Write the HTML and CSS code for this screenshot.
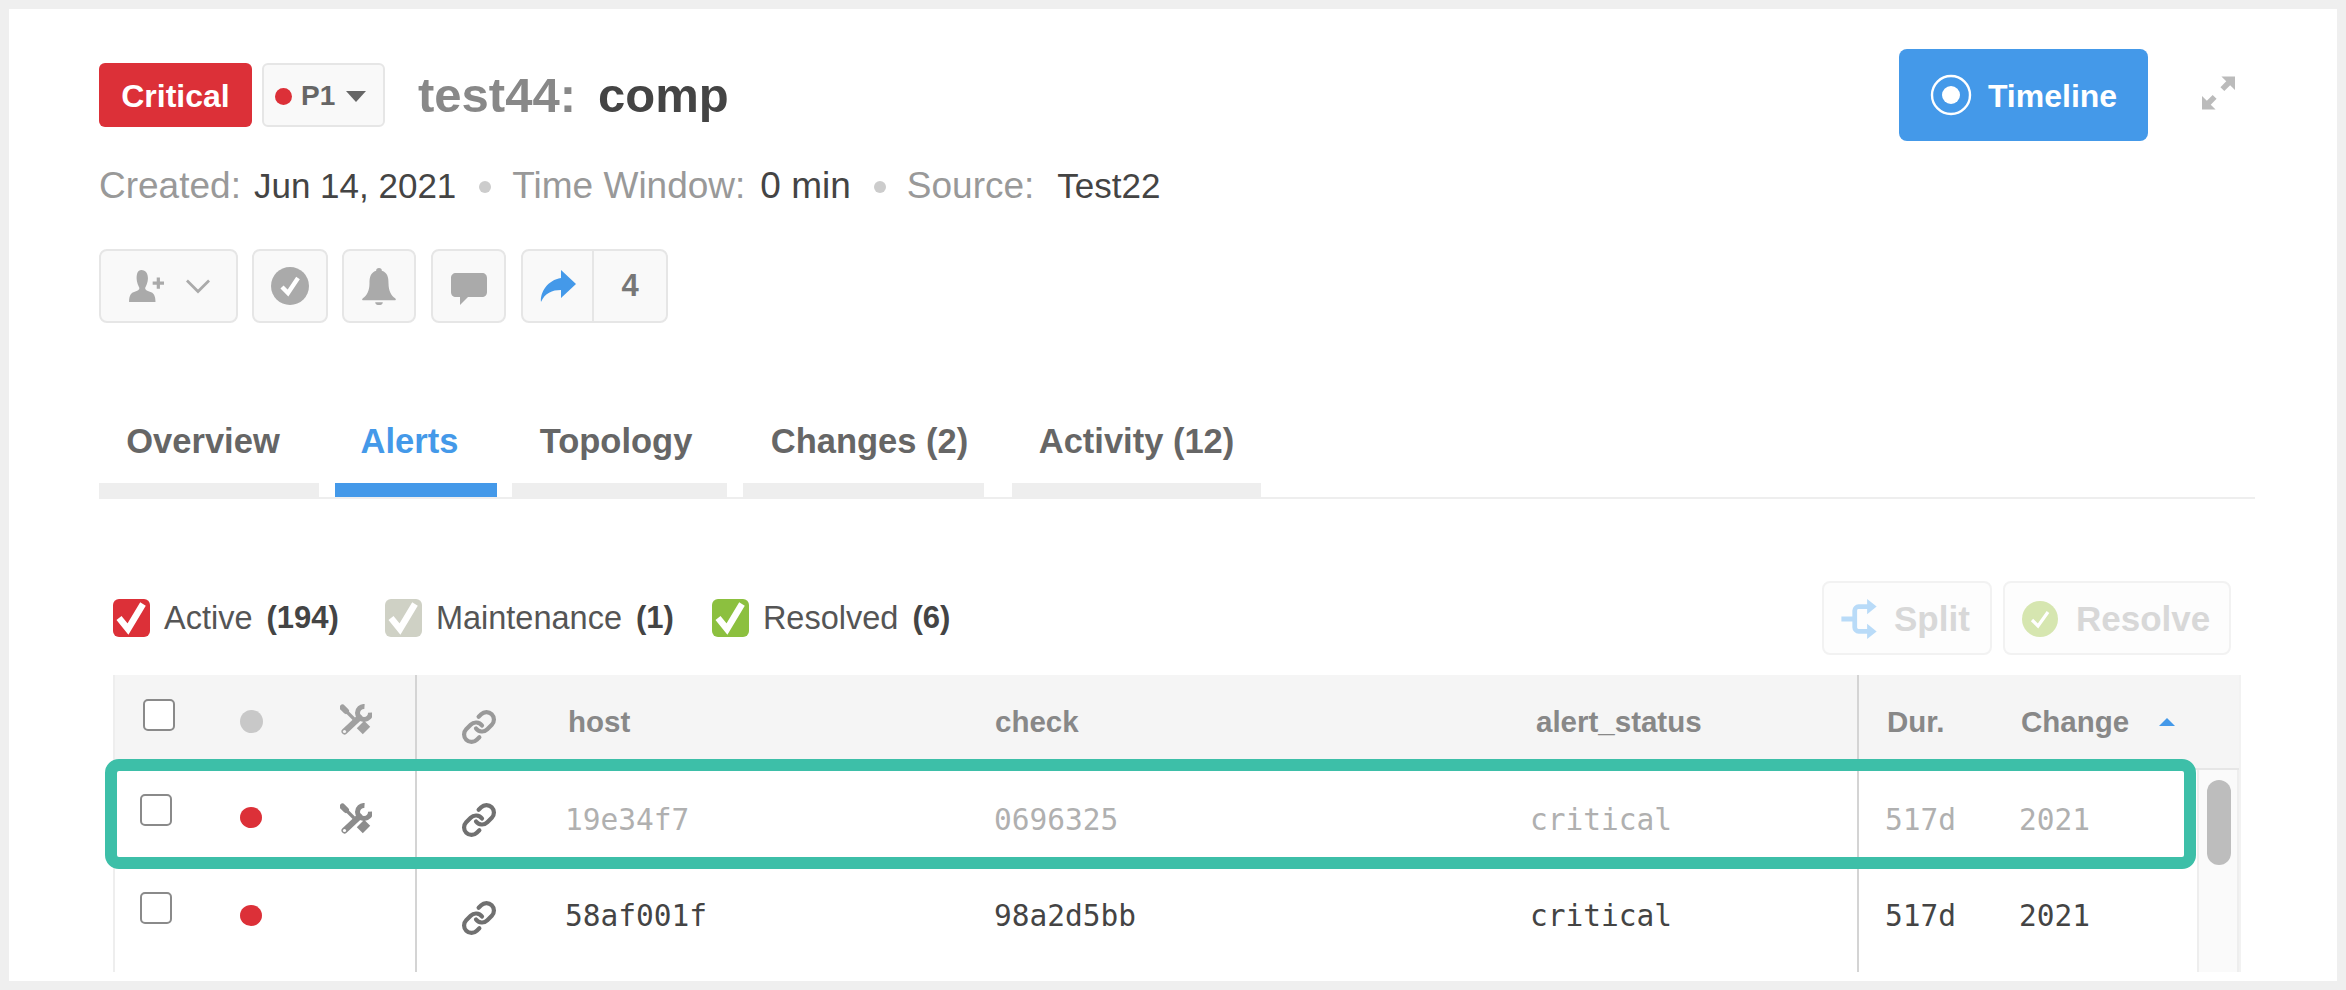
FILE: index.html
```html
<!DOCTYPE html>
<html lang="en">
<head>
<meta charset="utf-8">
<title>test44: comp</title>
<link rel="stylesheet" href="styles.css">
</head>
<body>
<main class="panel">
  <header class="head">
    <div class="head-left">
      <div class="title-row">
        <span class="badge">Critical</span>
        <button class="prio"><i class="dot dot-s"></i>P1<i class="caret"></i></button>
        <h1 class="title"><span class="title-key">test44:</span><span class="title-val">comp</span></h1>
      </div>
      <div class="meta">
        <span class="m-label">Created:</span><span class="m-val m-date">Jun 14, 2021</span><i class="sep"></i>
        <span class="m-label">Time Window:</span><span class="m-val">0 min</span><i class="sep"></i>
        <span class="m-label">Source:</span><span class="m-val m-src">Test22</span>
      </div>
      <div class="actions">
        <button class="act act-assign">
          <svg class="ic-person" viewBox="0 0 40 36"><path fill="#aaa" d="M14 1c5 0 7 4 7 9 0 4-2 8-3 10 0 2 2 3 5 4 4 1 6 4 6 11H1c0-7 2-10 6-11 3-1 5-2 5-4-1-2-3-6-3-10 0-5 1-9 5-9z"/><path fill="none" stroke="#aaa" stroke-width="3.4" d="M32 9v12M26 15h12"/></svg>
          <svg class="ic-chev" viewBox="0 0 26 16"><path fill="none" stroke="#aaa" stroke-width="3" d="M1 2l12 12L25 2"/></svg>
        </button>
        <button class="act act-icon">
          <svg class="ic-30" viewBox="0 0 38 38"><circle cx="19" cy="19" r="19" fill="#aaa"/><path fill="none" stroke="#fff" stroke-width="4.4" d="M11 20l6 6 10-15"/></svg>
        </button>
        <button class="act act-icon act-bell">
          <svg class="ic-30" viewBox="0 0 38 40"><path fill="#aaa" d="M19 1c2 0 3 1 3 3 6 2 7 7 7 13 0 8 3 13 7 16 1 1 1 2 0 2H2c-1 0-1-1 0-2 4-3 7-8 7-16 0-6 1-11 7-13 0-2 1-3 3-3z"/><path fill="#aaa" d="M15 37h8c0 2-2 3-4 3s-4-1-4-3z"/></svg>
        </button>
        <button class="act act-icon act-comment">
          <svg class="ic-30" viewBox="0 0 38 38"><path fill="#aaa" d="M6 6h26c3 0 5 2 5 5v14c0 3-2 5-5 5H18l-8 8v-8H6c-3 0-5-2-5-5V11c0-3 2-5 5-5z"/></svg>
        </button>
        <div class="act act-share">
          <span class="share-ic"><svg class="ic-share" viewBox="0 0 36 32"><path fill="#4499e9" d="M21 0l15 14-15 14v-8C12 20 5 23 1 32 0 22 8 10 21 8z"/></svg></span>
          <span class="share-n">4</span>
        </div>
      </div>
    </div>
    <div class="head-right">
      <button class="timeline">
        <svg class="ic-target" viewBox="0 0 42 42"><circle cx="21" cy="21" r="19" fill="none" stroke="#fff" stroke-width="2.4"/><circle cx="21" cy="21" r="9" fill="#fff"/></svg>
        <span class="timeline-text">Timeline</span>
      </button>
      <svg class="ic-expand" viewBox="0 0 34 34"><path fill="#bbb" d="M20 0h14v14l-5-5-6 6-4-4 6-6zM14 34H0V20l5 5 6-6 4 4-6 6z"/></svg>
    </div>
  </header>

  <nav class="tabs">
    <a class="tab tab-1"><span class="tab-text">Overview</span></a>
    <a class="tab tab-2 is-active"><span class="tab-text">Alerts</span></a>
    <a class="tab tab-3"><span class="tab-text">Topology</span></a>
    <a class="tab tab-4"><span class="tab-text">Changes (2)</span></a>
    <a class="tab tab-5"><span class="tab-text">Activity (12)</span></a>
  </nav>

  <section class="toolbar">
    <div class="filters">
      <label class="filter"><svg class="fcheck" viewBox="0 0 37 38"><rect width="37" height="38" rx="6" fill="#dc3038"/><path fill="none" stroke="#fff" stroke-width="6.5" d="M6 19l9 11L30 5"/></svg><span class="f-name">Active</span><b class="f-n">(194)</b></label>
      <label class="filter"><svg class="fcheck" viewBox="0 0 37 38"><rect width="37" height="38" rx="6" fill="#cfd1c5"/><path fill="none" stroke="#fff" stroke-width="6.5" d="M6 19l9 11L30 5"/></svg><span class="f-name">Maintenance</span><b class="f-n">(1)</b></label>
      <label class="filter"><svg class="fcheck" viewBox="0 0 37 38"><rect width="37" height="38" rx="6" fill="#8cc03f"/><path fill="none" stroke="#fff" stroke-width="6.5" d="M6 19l9 11L30 5"/></svg><span class="f-name">Resolved</span><b class="f-n">(6)</b></label>
    </div>
    <div class="tools">
      <button class="tool tool-split">
        <svg class="ic-split" viewBox="0 0 38 42"><path fill="none" stroke="#b9dbf8" stroke-width="5" d="M0 21h14M33 8H18c-2 0-4 2-4 4v18c0 2 2 4 4 4h15"/><path fill="#b9dbf8" d="M27 0l10 8-10 8zM27 26l10 8-10 8z"/></svg>
        Split
      </button>
      <button class="tool tool-resolve">
        <svg class="ic-resolve" viewBox="0 0 36 36"><circle cx="18" cy="18" r="18" fill="#d6e6b0"/><path fill="none" stroke="#fff" stroke-width="3.2" d="M10 19l6 6 10-14"/></svg>
        Resolve
      </button>
    </div>
  </section>

  <section class="table-wrap">
    <div class="table">
      <div class="row row-head">
        <div class="c c-check"><i class="cb cb-head"></i></div>
        <div class="c c-dot"><i class="dot dot-l dot-grey"></i></div>
        <div class="c c-tool">
          <svg class="ic-tools tools-light" viewBox="0 0 32 32"><use href="#tools"/></svg>
        </div>
        <div class="c c-link"><svg class="ic-link link-light" viewBox="0 0 24 24"><use href="#link"/></svg></div>
        <div class="c c-host">host</div>
        <div class="c c-chk">check</div>
        <div class="c c-status">alert_status</div>
        <div class="c c-dur">Dur.</div>
        <div class="c c-change">Change<i class="sort"></i></div>
      </div>
      <div class="body">
        <div class="rows">
          <div class="row row-data is-muted">
            <div class="c c-check"><i class="cb"></i></div>
            <div class="c c-dot"><i class="dot dot-l"></i></div>
            <div class="c c-tool"><svg class="ic-tools" viewBox="0 0 32 32"><use href="#tools"/></svg></div>
            <div class="c c-link"><svg class="ic-link" viewBox="0 0 24 24"><use href="#link"/></svg></div>
            <div class="c c-host">19e34f7</div>
            <div class="c c-chk">0696325</div>
            <div class="c c-status">critical</div>
            <div class="c c-dur">517d</div>
            <div class="c c-change">2021</div>
          </div>
          <div class="row row-data is-second">
            <div class="c c-check"><i class="cb"></i></div>
            <div class="c c-dot"><i class="dot dot-l"></i></div>
            <div class="c c-tool"></div>
            <div class="c c-link"><svg class="ic-link" viewBox="0 0 24 24"><use href="#link"/></svg></div>
            <div class="c c-host">58af001f</div>
            <div class="c c-chk">98a2d5bb</div>
            <div class="c c-status">critical</div>
            <div class="c c-dur">517d</div>
            <div class="c c-change">2021</div>
          </div>
          <div class="row row-data">
            <div class="c c-check"></div><div class="c c-dot"></div><div class="c c-tool"></div><div class="c c-link"></div>
            <div class="c c-host"></div><div class="c c-chk"></div><div class="c c-status"></div><div class="c c-dur"></div><div class="c c-change"></div>
          </div>
        </div>
        <div class="scroll"><i class="thumb"></i></div>
      </div>
    </div>
    <div class="highlight"></div>
  </section>
</main>

<svg class="defs" width="0" height="0" aria-hidden="true">
  <defs>
    <g id="tools">
      <path fill="none" stroke="currentColor" stroke-width="6" stroke-linecap="round" d="M2.5 3.5L6 7"/>
      <path fill="none" stroke="currentColor" stroke-width="3.2" d="M5 6l9 9"/>
      <path fill="none" stroke="currentColor" stroke-width="10.5" stroke-linejoin="round" d="M20.5 20.5l6 6"/>
      <path fill="none" stroke="currentColor" stroke-width="5" d="M24.5 2.5A6.5 6.5 0 1 0 30.5 8.5"/>
      <path fill="none" stroke="currentColor" stroke-width="6" stroke-linecap="round" d="M19.5 13.5L4.5 27.5"/>
      <circle class="hole" cx="4.5" cy="27.5" r="1.6"/>
    </g>
    <g id="link" fill="none" stroke="currentColor" stroke-width="2.8" stroke-linecap="round">
      <path d="M10 13a5 5 0 0 0 7.54.54l3-3a5 5 0 0 0-7.07-7.07l-1.72 1.71"/>
      <path d="M14 11a5 5 0 0 0-7.54-.54l-3 3a5 5 0 0 0 7.07 7.07l1.71-1.71"/>
    </g>
  </defs>
</svg>
</body>
</html>
```
FILE: styles.css
```css
* { box-sizing: border-box; }
html, body { margin: 0; height: 990px; overflow: hidden; }
body { background: #efefef; padding: 9px; font-family: "Liberation Sans", Arial, sans-serif; color: #444; }
button { font-family: inherit; cursor: pointer; }
i { display: block; }
.defs { position: absolute; }

.panel { background: #fff; height: 972px; padding: 40px 82px 0 90px; overflow: hidden; }

.head { display: flex; justify-content: space-between; align-items: flex-start; }
.head-left { padding-top: 14px; }
.title-row { display: flex; align-items: center; height: 64px; }
.badge { background: #dc3038; color: #fff; font-weight: 700; font-size: 32px; width: 153px; height: 64px; line-height: 67px; text-align: center; border-radius: 6px; }
.prio { margin-left: 10px; width: 123px; height: 64px; border: 2px solid #e6e6e6; border-radius: 6px; background: #f9f9f9; display: flex; align-items: center; padding: 2px 0 0 11px; font-weight: 700; font-size: 28px; color: #666; }
.dot { border-radius: 50%; background: #dc3038; }
.dot-s { width: 17px; height: 17px; margin-right: 9px; }
.caret { margin-left: 11px; width: 0; height: 0; border-left: 10px solid transparent; border-right: 10px solid transparent; border-top: 11px solid #666; }
.title { margin: 0 0 0 33px; font-size: 49px; line-height: 60px; font-weight: 700; display: flex; }
.title-key { color: #888; }
.title-val { color: #444; margin-left: 22px; }

.meta { display: flex; align-items: center; margin-top: 39px; height: 40px; font-size: 37px; color: #999; }
.m-val { color: #444; margin-left: 15px; font-size: 37px; }
.m-date { font-size: 35px; margin-left: 13px; }
.m-src { font-size: 35px; margin-left: 23px; }
.sep { width: 12px; height: 12px; border-radius: 50%; background: #ccc; margin: 2px 21px 0 23px; }

.actions { display: flex; margin-top: 43px; height: 74px; }
.act { height: 74px; border: 2px solid #e6e6e6; border-radius: 8px; background: #f9f9f9; display: flex; align-items: center; justify-content: center; padding: 0; }
.act-assign { width: 139px; gap: 20px; margin-right: 14px; }
.act-icon { width: 76px; margin-right: 14px; }
.act-bell { width: 74px; margin-right: 15px; }
.act-comment { width: 75px; margin-right: 15px; }
.act-share { width: 147px; justify-content: flex-start; }
.ic-person { width: 38px; height: 34px; }
.ic-chev { width: 24px; height: 16px; }
.ic-30 { width: 38px; height: 38px; }
.share-ic { width: 71px; height: 100%; border-right: 2px solid #e6e6e6; display: flex; align-items: center; justify-content: center; }
.ic-share { width: 36px; height: 32px; }
.share-n { flex: 1; text-align: center; font-weight: 700; font-size: 31px; color: #777; }

.head-right { display: flex; align-items: center; gap: 54px; margin-right: 20px; height: 92px; }
.timeline { width: 249px; height: 92px; background: #4499e9; border: 0; border-radius: 8px; color: #fff; font-weight: 700; font-size: 32px; display: flex; align-items: center; justify-content: center; gap: 16px; padding: 0; }
.timeline-text { padding-top: 2px; }
.ic-target { width: 42px; height: 42px; }
.ic-expand { width: 33px; height: 34px; margin-top: -4px; }

.tabs { display: flex; margin: 98px 0 0; border-bottom: 2px solid #eee; height: 78px; }
.tab { display: block; height: 76px; border-bottom: 14px solid #eee; font-size: 34.5px; font-weight: 700; color: #666; text-align: center; line-height: 40px; }
.tab-text { display: block; }
.tab-1 { width: 220px; padding-right: 12px; }
.tab-2 { width: 162px; margin-left: 16px; padding-right: 13px; }
.tab-3 { width: 215px; margin-left: 15px; padding-right: 7px; }
.tab-4 { width: 241px; margin-left: 16px; padding-left: 12px; }
.tab-5 { width: 249px; margin-left: 28px; }
.is-active { color: #4499e9; border-bottom-color: #4499e9; }

.toolbar { display: flex; justify-content: space-between; align-items: center; margin-top: 82px; height: 74px; padding: 0 24px 0 14px; }
.filters { display: flex; align-items: center; }
.filter { display: flex; align-items: center; font-size: 32.5px; color: #555; }
.filter + .filter { margin-left: 46px; }
.filter:last-child { margin-left: 38px; }
.fcheck { width: 37px; height: 38px; margin-right: 14px; }
.f-n { margin-left: 14px; color: #444; font-size: 31px; }
.tools { display: flex; gap: 11px; }
.tool { height: 74px; border: 2px solid #f2f2f2; border-radius: 8px; background: #fdfdfd; color: #d8d8d8; font-weight: 700; font-size: 35px; display: flex; align-items: center; padding: 2px 0 0; }
.tool-split { width: 170px; padding-left: 17px; gap: 16px; }
.tool-resolve { width: 228px; padding-left: 17px; gap: 18px; }
.ic-split { width: 37px; height: 40px; }
.ic-resolve { width: 36px; height: 36px; }

.table-wrap { position: relative; margin: 20px 0 0 14px; width: 2128px; height: 297px; }
.table { height: 100%; overflow: hidden; border-left: 2px solid #eee; border-right: 2px solid #f2f2f2; }
.row { display: grid; grid-template-columns: 90px 92px 120px 123px 427px 541px 351px 133px 1fr; }
.c { display: flex; align-items: center; }
.row-head { height: 95px; background: #f5f5f5; border-bottom: 2px solid #e6e6e6; font-size: 29.5px; font-weight: 700; color: #888; --hole: #f5f5f5; }
.row-head .c-check { padding-left: 28px; align-items: flex-start; padding-top: 24px; }
.row-head .c-tool { align-items: flex-start; padding-top: 29px; }
.row-head .c-link { padding-top: 10px; }
.row-head .c-host { padding-left: 28px; }
.row-head .c-chk { padding-left: 28px; }
.row-head .c-status { padding-left: 28px; }
.row-head .c-dur { padding-left: 28px; }
.row-head .c-change { padding-left: 29px; }

.body { display: flex; height: 202px; }
.rows { flex: 1; min-width: 0; --hole: #fff; }
.row-data { height: 98px; font-family: "DejaVu Sans Mono", monospace; font-size: 29.5px; color: #444; }
.row-data .c-check { padding: 24px 0 0 25px; align-items: flex-start; }
.row-data .c-dot { padding-bottom: 4px; }
.row-data .c-link { padding-top: 2px; }
.row-data .c-host { padding-left: 25px; }
.row-data .c-chk { padding-left: 27px; }
.row-data .c-status { padding-left: 22px; }
.row-data .c-dur { padding-left: 26px; }
.row-data .c-change { padding-left: 27px; }
.is-muted { color: #b0b0b0; }
.is-muted .c-host, .is-muted .c-chk, .is-muted .c-status, .is-muted .c-dur, .is-muted .c-change { padding-top: 2px; }
.is-second .c-host, .is-second .c-chk, .is-second .c-status, .is-second .c-dur, .is-second .c-change { padding-bottom: 2px; }
.hole { fill: var(--hole); }

.c-check, .c-dot, .c-tool { min-width: 0; }
.c-dot, .c-tool, .c-link { justify-content: center; }
.c-tool { border-right: 2px solid #d4d4d4; }
.c-status { border-right: 2px solid #d4d4d4; }

.cb { width: 32px; height: 32px; background: #fff; border: 2px solid #8a8a8a; border-radius: 5px; }
.dot-l { width: 22px; height: 21px; }
.dot-grey { background: #c8c8c8; width: 23px; height: 23px; }
.ic-tools { width: 32px; height: 32px; color: #8c8c8c; }
.tools-light { color: #a0a0a0; }
.ic-link { width: 36px; height: 36px; color: #707070; }
.link-light { color: #999; }
.sort { margin-left: 30px; width: 0; height: 0; border-left: 8px solid transparent; border-right: 8px solid transparent; border-bottom: 8px solid #4499e9; }

.scroll { width: 42px; flex: none; background: #fafafa; border-left: 2px solid #eee; border-right: 2px solid #eee; padding: 10px 8px 0 8px; }
.thumb { width: 24px; height: 85px; background: #bdbdbd; border-radius: 12px; }

.highlight { position: absolute; left: -8px; top: 84px; width: 2091px; height: 110px; border: 12px solid #3dbfa8; border-radius: 14px; pointer-events: none; }
```
